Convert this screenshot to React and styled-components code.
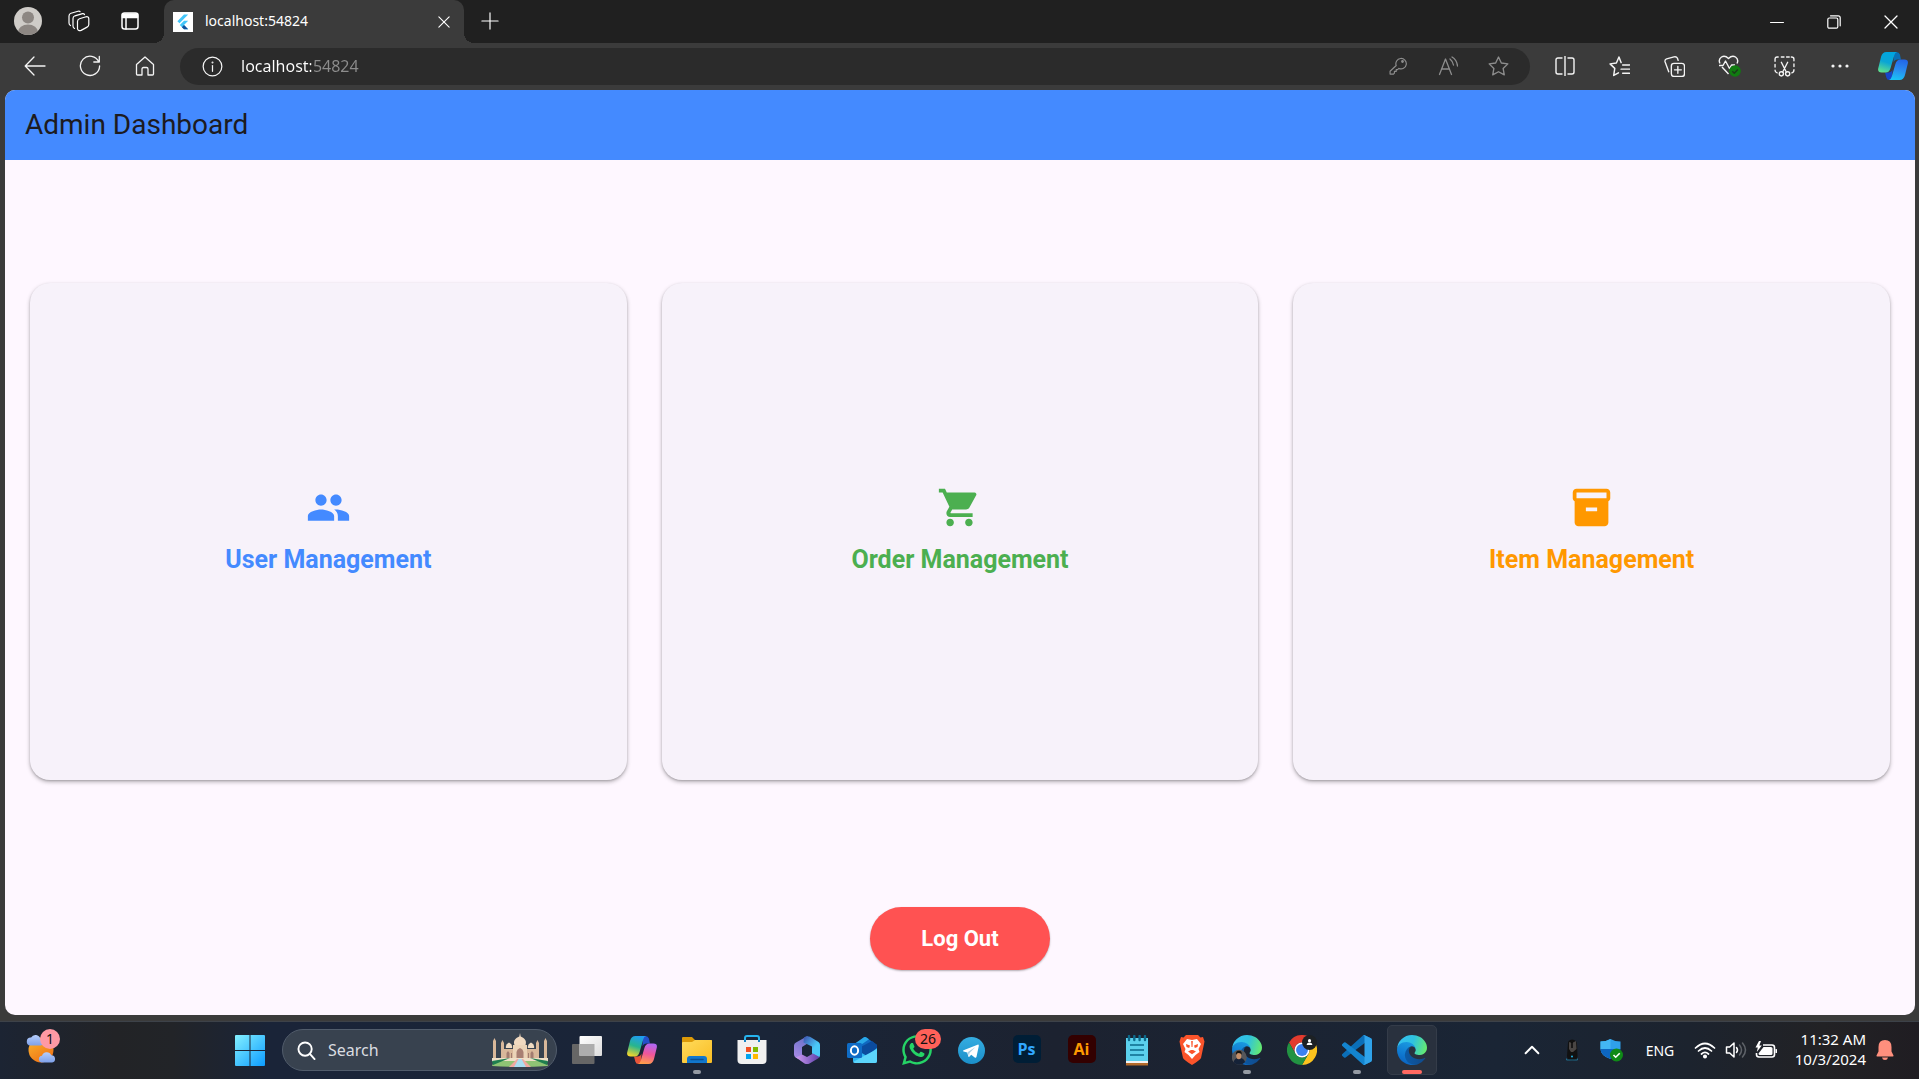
import React from "react";
import styled, { createGlobalStyle } from "styled-components";
import { MdPeople, MdShoppingCart } from "react-icons/md";
import { FaWhatsapp } from "react-icons/fa";

const uiFont = `"Noto Sans", "Open Sans", sans-serif`;

const GlobalStyle = createGlobalStyle`
  *, *::before, *::after { box-sizing: border-box; }
  body { margin: 0; background: #3b3b3b; font-family: ${uiFont}; }
  button { border: 0; padding: 0; background: none; color: inherit; font: inherit; cursor: pointer; }
  svg { display: block; flex: none; }
`;

const Screen = styled.div`
  display: flex;
  flex-direction: column;
  min-height: 100vh;
`;

/* ---------- browser frame ---------- */

const TabStrip = styled.header`
  display: flex;
  height: 43px;
  background: #202020;
  color: #fff;
`;

const StripTools = styled.div`
  display: flex;
  align-items: center;
  width: 164px;
  padding: 0 8px 2px 2px;
`;

const StripButton = styled.button`
  display: grid;
  place-items: center;
  width: 52px;
  height: 42px;
`;

const Tab = styled.div`
  position: relative;
  display: flex;
  align-items: center;
  gap: 12px;
  width: 300px;
  padding: 0 10px 0 9px;
  background: #3b3b3b;
  border-radius: 10px 10px 0 0;
  &::before, &::after {
    content: "";
    position: absolute;
    bottom: 0;
    width: 10px;
    height: 10px;
  }
  &::before { left: -10px; background: radial-gradient(circle at 0 0, #202020 10px, #3b3b3b 10px); }
  &::after { right: -10px; background: radial-gradient(circle at 100% 0, #202020 10px, #3b3b3b 10px); }
`;

const TabTitle = styled.span`
  flex: 1;
  padding-bottom: 2px;
  font-size: 14px;
  line-height: 20px;
`;

const TabClose = styled.button`
  display: grid;
  place-items: center;
  width: 20px;
  height: 20px;
`;

const WindowControls = styled.div`
  display: flex;
  margin-left: auto;
`;

const WindowButton = styled.button`
  display: grid;
  place-items: center;
  width: 57px;
  height: 43px;
`;

const Toolbar = styled.nav`
  display: flex;
  align-items: center;
  height: 47px;
  padding: 0 0 1px 7px;
  background: #3b3b3b;
  color: #f4f4f4;
`;

const ToolButton = styled.button`
  display: grid;
  place-items: center;
  width: ${(p) => p.$width || 55}px;
  height: 37px;
  color: ${(p) => (p.$dim ? "#8d8d8d" : "inherit")};
`;

const AddressBar = styled.div`
  display: flex;
  flex: 1;
  align-items: center;
  height: 37px;
  margin: 0 7px 0 8px;
  padding: 0 7px 0 17px;
  border-radius: 19px;
  background: #2b2b2b;
`;

const AddressInput = styled.input`
  flex: 1;
  min-width: 0;
  height: 28px;
  margin-left: 13px;
  padding: 0;
  border: 0;
  outline: 0;
  font-family: ${uiFont};
  font-size: 16px;
  color: transparent;
  background: linear-gradient(90deg, #fff 70px, #8d8d8d 70px);
  background-clip: text;
  -webkit-background-clip: text;
`;

/* ---------- page ---------- */

const Viewport = styled.div`
  display: flex;
  flex: 1;
  flex-direction: column;
  margin: 0 4px 6px 5px;
  border-radius: 10px;
  overflow: hidden;
  background: #fef7ff;
  font-family: Roboto, sans-serif;
`;

const AppBar = styled.div`
  display: flex;
  align-items: center;
  height: 70px;
  padding: 0 20px;
  background: #448aff;
`;

const AppTitle = styled.h1`
  margin: 0;
  font-size: 28px;
  font-weight: 400;
  line-height: 36px;
  color: #1d1b20;
`;

const Dashboard = styled.main`
  display: flex;
  flex: 1;
  flex-direction: column;
  align-items: center;
  padding: 0 25px 45px;
`;

const CardArea = styled.div`
  display: flex;
  flex: 1;
  align-items: center;
  width: 100%;
`;

const CardGrid = styled.div`
  display: grid;
  flex: 1;
  grid-template-columns: repeat(3, 1fr);
  gap: 35px;
`;

const Card = styled.button`
  display: flex;
  flex-direction: column;
  align-items: center;
  justify-content: center;
  gap: 12px;
  aspect-ratio: 6 / 5;
  border-radius: 20px;
  background: #f7f2fa;
  box-shadow: 0 2px 4px rgba(0, 0, 0, 0.28), 0 1px 2px rgba(0, 0, 0, 0.14);
  color: ${(p) => p.$accent};
`;

const CardLabel = styled.span`
  font-size: 25px;
  font-weight: 700;
  line-height: 36px;
`;

const LogOut = styled.button`
  width: 180px;
  height: 63px;
  margin-top: 4px;
  border-radius: 32px;
  background: #ff5252;
  box-shadow: 0 1px 2px rgba(0, 0, 0, 0.3);
  color: #fff;
  font-size: 22px;
  font-weight: 700;
  line-height: 28px;
`;

/* ---------- taskbar ---------- */

const Taskbar = styled.footer`
  display: flex;
  align-items: center;
  height: 58px;
  box-shadow: inset 0 1px #3d4249;
  background: linear-gradient(90deg, #1c2433 0%, #222326 6%, #222428 9%, #1a2438 14%, #1a2538 40%, #1c2230 55%, #1a2535 78%, #1c232e 88%, #222225 95%, #201d22 100%);
  color: #fff;
`;

const WeatherArea = styled.div`
  flex: none;
  width: 222px;
  padding-left: 14px;
`;

const Slot = styled.button`
  position: relative;
  display: grid;
  place-items: center;
  flex: none;
  width: 55px;
  height: 50px;
`;

const ActiveSlot = styled(Slot)`
  width: 50px;
  margin: 0 2px 0 3px;
  border: 1px solid #343c49;
  border-radius: 5px;
  background: #29313e;
`;

const Indicator = styled.span`
  position: absolute;
  bottom: ${(p) => (p.$active ? 0 : 1)}px;
  left: 50%;
  width: ${(p) => (p.$active ? 20 : 8)}px;
  height: 4px;
  border-radius: 2px;
  background: ${(p) => (p.$active ? "#ff6961" : "#949aa3")};
  transform: translateX(-50%);
`;

const Badge = styled.span`
  position: absolute;
  top: 4px;
  right: ${(p) => p.$right}px;
  min-width: 20px;
  height: 20px;
  padding: 0 5px;
  border-radius: 10px;
  background: ${(p) => p.$color};
  color: #111;
  font-size: 14px;
  line-height: 20px;
  text-align: center;
`;

const SearchBox = styled.label`
  display: flex;
  align-items: center;
  flex: none;
  width: 275px;
  height: 42px;
  margin: 0 2px 0 5px;
  padding: 0 8px 0 14px;
  border: 1px solid #515c6b;
  border-radius: 21px;
  background: #38424f;
`;

const SearchInput = styled.input`
  flex: 1;
  min-width: 0;
  margin: 0;
  padding: 0 0 0 12px;
  border: 0;
  outline: 0;
  background: none;
  color: #fff;
  font-family: ${uiFont};
  font-size: 16px;
  &::placeholder { color: #dadde1; opacity: 1; }
`;

const AppTile = styled.span`
  display: grid;
  place-items: center;
  width: 28px;
  height: 28px;
  margin-bottom: 2px;
  border-radius: 5px;
  background: ${(p) => p.$bg};
  color: ${(p) => p.$fg};
  font-family: "Open Sans", sans-serif;
  font-size: 16px;
  font-weight: 700;
  line-height: 26px;
`;

const Tray = styled.div`
  display: flex;
  align-items: center;
  margin-left: auto;
  padding-right: 20px;
`;

const TrayButton = styled.button`
  display: grid;
  place-items: center;
  width: ${(p) => p.$width}px;
  height: 50px;
  font-size: 14px;
`;

const Clock = styled.button`
  display: flex;
  flex-direction: column;
  align-items: flex-end;
  width: 84px;
  margin-right: 5px;
  padding-bottom: 2px;
  font-size: 15px;
  line-height: 20px;
  white-space: nowrap;
`;

/* ---------- icons ---------- */

const Line = ({ size = 20, w = 1.3, children, box = 20 }) => (
  <svg width={size} height={size} viewBox={`0 0 ${box} ${box}`} fill="none" stroke="currentColor" strokeWidth={w} strokeLinecap="round" strokeLinejoin="round">
    {children}
  </svg>
);

const Avatar = () => (
  <svg width="28" height="28" viewBox="0 0 28 28">
    <clipPath id="avatarClip"><circle cx="14" cy="14" r="14" /></clipPath>
    <g clipPath="url(#avatarClip)">
      <rect width="28" height="28" fill="#cfccc8" />
      <circle cx="14" cy="10.5" r="6" fill="#8d8783" />
      <ellipse cx="14" cy="25" rx="10" ry="7.5" fill="#8d8783" />
    </g>
  </svg>
);

const Workspaces = () => (
  <Line size={22} box={22} w={1.2}>
    <path d="M11.500 8.800 18 6.800q2.600-.5 2.800 1.800v6q0 1.800-1.700 2.500l-6 3.300q-2.900 1-3.600-1.500V11.500q0-2 2-2.700z" />
    <path d="M6.500 18.500Q5 17.800 5 16V8.500q0-2 2-2.700L14.500 3.600q1.500-.2 2 1" />
    <path d="M2.500 15.500Q1 14.700 1 13V6q0-2 2-2.700L10 1.200q1.400-.4 2 .3" />
  </Line>
);

const TabMenu = () => (
  <Line size={18} box={18} w={1.5}>
    <rect x="1" y="1" width="16" height="16" rx="2.500" />
    <path d="M1.500 2h15v3.500h-15z" fill="currentColor" />
    <path d="M5 6v11" />
  </Line>
);

const Flutter = () => (
  <svg width="20" height="20" viewBox="0 0 20 20">
    <rect width="20" height="20" fill="#fff" />
    <path d="M11 2.500h4.200L6.500 11.300 4.400 9.200z" fill="#42c6fa" />
    <path d="M11 8.800h4.200L11 13l4.200 4.300H11L6.800 13z" fill="#42c6fa" />
    <path d="M8.900 15.200 11 13l4.200 4.300H11z" fill="#12519b" />
  </svg>
);

const Cross = ({ size }) => (
  <Line size={size} box={14} w={1.3}><path d="M1 1l12 12M13 1L1 13" /></Line>
);

const ribbons = {
  browser: [["#00a5e0", "#0aa5d5", "#5fe08d"], ["#2266e8", "#2a8cf0", "#19c3f5"], "#1746c8"],
  taskbar: [["#1f9cf0", "#27b58e", "#f4d62b"], ["#b067f2", "#f0559a", "#ff9e4a"], "#e8553a"],
};

const Copilot = ({ kind, size }) => {
  const [a, b, fold] = ribbons[kind];
  return (
    <svg width={size} height={size} viewBox="0 0 30 28">
      <defs>
        <linearGradient id={`${kind}A`} x1=".6" y1="0" x2=".3" y2="1">
          {a.map((c, i) => <stop key={c} offset={i / 2} stopColor={c} />)}
        </linearGradient>
        <linearGradient id={`${kind}B`} x1=".6" y1="0" x2=".4" y2="1">
          {b.map((c, i) => <stop key={c} offset={i / 2} stopColor={c} />)}
        </linearGradient>
      </defs>
      <path d="M16 0h2.500q2.600 0 3.400 2.600L23 7.500h-3.500q-3 0-4 3z" fill={kind === "browser" ? "#0a6fb5" : "#2450c8"} />
      <path d="M14 28h-2.500q-2.600 0-3.200-2.600L7 20.500h3.500q3 0 4-3z" fill={fold} />
      <path d="M8.500 0H19q-2 .5-2.800 3.400L12.600 16q-1.300 4.500-5 4.500H3.600Q-.8 20.500.3 16L3 5Q4.300 0 8.500 0z" fill={`url(#${kind}A)`} />
      <path d="M21.500 28H11q2-.5 2.800-3.400L17.400 12q1.300-4.500 5-4.500h4q4.400 0 3.300 4.500L27 23q-1.300 5-5.500 5z" fill={`url(#${kind}B)`} />
    </svg>
  );
};

const Inventory = () => (
  <svg width="45" height="45" viewBox="0 0 24 24" fill="currentColor">
    <path d="M20 2H4c-1 0-2 .9-2 2v3.010c0 .72.43 1.340 1 1.690V20c0 1.100 1.100 2 2 2h14c.9 0 2-.9 2-2V8.700c.57-.35 1-.97 1-1.690V4c0-1.100-1-2-2-2zm-5 12H9v-2h6v2zm5-7H4V4l16-.020V7z" />
  </svg>
);

const Weather = () => (
  <svg width="34" height="34" viewBox="0 0 34 34">
    <defs>
      <linearGradient id="sun" x1="0" y1="0" x2=".6" y2="1"><stop offset="0" stopColor="#fbb82e" /><stop offset="1" stopColor="#ef7416" /></linearGradient>
      <linearGradient id="cloud" x1="0" y1="0" x2="0" y2="1"><stop offset="0" stopColor="#b5cdfb" /><stop offset="1" stopColor="#7ea1ea" /></linearGradient>
    </defs>
    <circle cx="16" cy="17" r="12.500" fill="url(#sun)" />
    <path d="M5.500 12.500a4 4 0 01.6-8 5 5 0 019.200 1.200 3.500 3.500 0 01.7 6.800z" fill="url(#cloud)" />
    <path d="M16.500 29.500a3.400 3.400 0 01.5-6.700 5 5 0 019.300-.6 3.700 3.700 0 01.9 7.300z" fill="url(#cloud)" />
  </svg>
);

const WindowsLogo = () => (
  <svg width="30" height="31" viewBox="0 0 30 31">
    <linearGradient id="win" gradientUnits="userSpaceOnUse" x1="0" y1="0" x2="30" y2="31"><stop offset="0" stopColor="#84f0ff" /><stop offset="1" stopColor="#0c9cff" /></linearGradient>
    <path d="M1 0h13.500v15H0V1q0-1 1-1zM15.500 0H29q1 0 1 1v14H15.500zM0 16h14.500v15H1q-1 0-1-1zM15.500 16H30v14q0 1-1 1H15.500z" fill="url(#win)" />
  </svg>
);

const TajMahal = () => (
  <svg width="56" height="34" viewBox="0 0 56 34">
    <g fill="#d9b89a">
      <path d="M1 8l1.500-3L4 8v18H1zM9 10l1.500-3 1.500 3v16H9zM44 10l1.500-3 1.500 3v16h-3zM52 8l1.500-3L55 8v18h-3z" />
      <path d="M12 16h32v11H12z" />
      <path d="M21 12h14v15H21z" fill="#ebd3b7" />
      <path d="M28 0l.7 3.500C33 5.500 35 8 33.500 12h-11C21 8 23 5.500 27.300 3.500z" fill="#f0d9c0" />
      <path d="M14 15q-1-3.500 3-5.500 4 2 3 5.500zM36 15q-1-3.500 3-5.500 4 2 3 5.500z" fill="#efdac2" />
    </g>
    <path d="M24.500 26v-7q.5-3 3.500-4 3 1 3.500 4v7z" fill="#a87f72" />
    <path d="M14.500 25v-5l1.500-2 1.500 2v5zM38.500 25v-5l1.500-2 1.500 2v5zM19 25v-5h1v5zM36 25v-5h1v5z" fill="#a27c70" />
    <path d="M0 25h56v4H0z" fill="#efe0c8" />
    <path d="M0 33l2-5h52l2 5q-28 2-56 0z" fill="#8fc474" />
    <path d="M0 28l18-3-17 7zM56 28l-18-3 17 7z" fill="#1f7f4f" />
    <path d="M25 26h6l8 8H17z" fill="#f0a9a0" />
    <path d="M26.500 26h3l4.500 8H22z" fill="#a9def2" />
  </svg>
);

const TaskView = () => (
  <svg width="30" height="28" viewBox="0 0 30 28">
    <linearGradient id="tv" x1="0" y1="0" x2="1" y2="1"><stop offset="0" stopColor="#fff" /><stop offset="1" stopColor="#dcdcdc" /></linearGradient>
    <rect y="8" width="22.500" height="20" rx="1" fill="#666" />
    <rect x="7.500" width="22.500" height="20" rx="1" fill="url(#tv)" />
    <path d="M7.500 8h15v12h-15z" fill="#adadad" />
  </svg>
);

const Explorer = () => (
  <svg width="30" height="28" viewBox="0 0 30 28">
    <linearGradient id="folder" x1="0" y1="0" x2="1" y2="1"><stop offset="0" stopColor="#ffdb5c" /><stop offset="1" stopColor="#f9bd23" /></linearGradient>
    <path d="M0 2q0-1 1-1h9l3 3h16q1 0 1 1v9H0z" fill="#dc9a08" />
    <path d="M0 7q0-1 1-1h9l3-2h16q1 0 1 1v21q0 1-1 1H1q-1 0-1-1z" fill="url(#folder)" />
    <path d="M5 27v-4q0-3 3-3h14q3 0 3 3v4z" fill="#1177cd" />
    <path d="M9 23.500h12" stroke="#0a4f92" strokeWidth="1.500" strokeLinecap="round" />
  </svg>
);

const Store = () => (
  <svg width="30" height="30" viewBox="0 0 30 30">
    <path d="M8 7V3q0-2 2-2h10q2 0 2 2v4" fill="none" stroke="#26b4ee" strokeWidth="2" />
    <path d="M.5 5h29v20q0 4-4 4h-21q-4 0-4-4z" fill="#f0f0f0" />
    <path d="M9 12h5v5H9z" fill="#f25022" /><path d="M16 12h5v5h-5z" fill="#7fba00" />
    <path d="M9 19h5v5H9z" fill="#00a4ef" /><path d="M16 19h5v5h-5z" fill="#ffb900" />
    <path d="M8 5v2M22 5v2" stroke="#1784c4" strokeWidth="2" />
  </svg>
);

const Office = () => (
  <svg width="28" height="30" viewBox="0 0 28 30">
    <defs>
      <linearGradient id="of1" x1=".6" y1="0" x2=".2" y2="1"><stop offset="0" stopColor="#6b72c8" /><stop offset="1" stopColor="#a98be8" /></linearGradient>
      <linearGradient id="of2" x1="0" y1="0" x2="1" y2="1"><stop offset="0" stopColor="#3d4fae" /><stop offset=".6" stopColor="#4ac8f7" /></linearGradient>
      <linearGradient id="of3" x1="0" y1="0" x2="1" y2="0"><stop offset="0" stopColor="#cf9bf2" /><stop offset="1" stopColor="#5b3fa8" /></linearGradient>
    </defs>
    <path d="M14.500 1 3 7.500Q1 8.500 1 10.500v9q0 2 1.800 3.200L6 24l3-2.500V12l5.500-3.500z" fill="url(#of1)" />
    <path d="M11 2.500Q14 .2 17 1.800L25.500 7Q27 8 27 10v10q0 1.500-1 2.500l-7-4v-7L10.500 7.500z" fill="url(#of2)" />
    <path d="M3 22.500l6-3 5 2.500 6-3.500 6.500 3.500-1.500 1.500-8.500 5q-2.500 1.200-5 0z" fill="url(#of3)" />
  </svg>
);

const Outlook = () => (
  <svg width="30" height="28" viewBox="0 0 30 28">
    <path d="M6 9 17 1.200q1-.6 2 0L30 9v8H6z" fill="#1068c0" />
    <path d="M6 9l11-7.800q1-.6 2 0l3 2L8 13z" fill="#29a8e8" />
    <path d="M10 13 25 5l5 4v6l-15 8z" fill="#0b4b9e" />
    <path d="M6 12l14 8 10-8v13q0 2-2 2H8q-2 0-2-2z" fill="#2fb7f3" />
    <path d="M6 26l24-13v12q0 2-2 2H8z" fill="#5cd5fb" />
    <rect y="7" width="15" height="15" rx="1.500" fill="#0f6cc6" />
    <ellipse cx="7.500" cy="14.500" rx="3.600" ry="4.200" fill="none" stroke="#fff" strokeWidth="2" />
  </svg>
);

const Telegram = () => (
  <svg width="27" height="27" viewBox="0 0 27 27">
    <linearGradient id="tg" x1="0" y1="0" x2="0" y2="1"><stop offset="0" stopColor="#35ade1" /><stop offset="1" stopColor="#1b8fc9" /></linearGradient>
    <circle cx="13.500" cy="13.500" r="13.500" fill="url(#tg)" />
    <path d="M5.500 13.200 19.500 7.700q1.500-.4 1.300 1.200l-2.300 10.900q-.4 1.500-1.800.7l-3.500-2.700-1.900 1.900q-.8.7-1-.4l-1.100-3.800-3.600-1.100q-1.200-.5-.1-1.200z" fill="#fff" />
    <path d="M9.500 15.300 17.500 10 11.500 16l-.4 3.300z" fill="#a9cfe5" />
  </svg>
);

const Notepad = () => (
  <svg width="24" height="31" viewBox="0 0 24 31">
    <path d="M1 25h22v5.500H1z" fill="#b36a2a" />
    <path d="M1 3h22v25H1z" fill="#f2f2f2" />
    <path d="M1 3h22v23H1z" fill="#5bd0ec" />
    <path d="M4 1v4M9.300 1v4M14.600 1v4M20 1v4" stroke="#0d6a8c" strokeWidth="2.400" strokeLinecap="round" />
    <path d="M5 10h14M5 15h14M5 20h14" stroke="#0d6a8c" strokeWidth="1.700" />
  </svg>
);

const Brave = () => (
  <svg width="26" height="30" viewBox="0 0 26 30">
    <path d="M7 0h12l2.500 2.500L24 2l1.500 4.500L25 9l-3 14q-1 2-9 7-8-5-9-7L1 9 .5 6.500 2 2l2.500.5z" fill="#fb542b" />
    <path d="M13 5l5-1 4 5-2.500 5 1 3-4 3-3.500 4-3.500-4-4-3 1-3L4 9l4-5z" fill="#fff" />
    <path d="M7 9l4 1.500-.8 2.500L7.500 12zM19 9l-4 1.500.8 2.500 2.700-1zM9 16.500l3-1.500h2l3 1.500-4 2.800zM12.200 6h1.600l-.3 6h-1z" fill="#fb542b" />
  </svg>
);

const Edge = ({ children }) => (
  <svg width="30" height="30" viewBox="0 0 256 256">
    <defs>
      <linearGradient id="edA" x1=".1" y1=".5" x2="1" y2=".5"><stop offset="0" stopColor="#0c59a4" /><stop offset="1" stopColor="#114a8b" /></linearGradient>
      <linearGradient id="edB" x1=".6" y1="0" x2=".3" y2="1"><stop offset="0" stopColor="#1b9de2" /><stop offset=".6" stopColor="#0f78d0" /><stop offset="1" stopColor="#0a60bd" /></linearGradient>
      <linearGradient id="edC" x1="0" y1=".4" x2="1" y2=".6"><stop offset="0" stopColor="#35c1f1" /><stop offset=".5" stopColor="#2fc2df" /><stop offset="1" stopColor="#66eb6e" /></linearGradient>
    </defs>
    <path d="M235.680 195.460a93.730 93.730 0 01-10.540 4.710 101.870 101.870 0 01-35.900 6.460c-47.320 0-88.540-32.550-88.540-74.320A31.480 31.480 0 01117.130 105c-42.800 1.800-53.800 46.400-53.800 72.530 0 73.880 68.090 78.370 82.760 78.370 7.910 0 19.840-2.300 27-4.560l1.310-.44a128.340 128.340 0 0066.600-49.800 4 4 0 00-5.320-5.640z" fill="url(#edA)" />
    <path d="M105.730 241.420a79.200 79.200 0 01-22.740-21.340 80.720 80.720 0 0129.530-120c3.120-1.470 8.450-4.130 15.540-4a32.350 32.350 0 0125.690 13 31.880 31.880 0 016.360 18.660c0-.21 24.460-79.600-80-79.600-43.900 0-80 41.660-80 78.210a130.150 130.150 0 0012.110 56 128 128 0 00156.380 67.110 75.550 75.550 0 01-62.780-8z" fill="url(#edB)" />
    <path d="M152.290 148.860c-.81 1.050-3.300 2.500-3.300 5.660 0 2.610 1.700 5.120 4.720 7.230 14.380 10 41.490 8.680 41.560 8.680a59.560 59.560 0 0030.270-8.350 61.380 61.380 0 0030.430-52.880c.26-22.410-8-37.310-11.340-43.910C223.460 23.840 177.720 0 128 0A128 128 0 000 126.200c.48-36.540 36.800-66.050 80-66.050 3.500 0 23.460.34 42 10.070 16.340 8.580 24.900 18.940 30.850 29.210 6.180 10.670 7.280 24.150 7.280 29.520s-2.740 13.330-7.840 19.910z" fill="url(#edC)" />
    {children}
  </svg>
);

const ProfilePhoto = () => (
  <g>
    <circle cx="62" cy="190" r="64" fill="#55565a" />
    <path d="M14 232q8-36 44-38 40 0 54 36-22 24-50 24-30 0-48-22z" fill="#152238" />
    <ellipse cx="58" cy="176" rx="22" ry="30" fill="#c48e68" />
    <path d="M34 170q-4-36 26-36 28 2 22 34-6-14-24-14-18 0-24 16z" fill="#16130f" />
  </g>
);

const Chrome = () => (
  <svg width="30" height="30" viewBox="0 0 48 48">
    <path d="M24 12h20.800A24 24 0 003.200 12l10.400 18A12 12 0 0124 12z" fill="#e33b2e" />
    <path d="M24 12h20.800A24 24 0 0124 48l10.400-18A12 12 0 0024 12z" fill="#fcc31e" />
    <path d="M13.600 30 3.200 12A24 24 0 0024 48l10.400-18a12 12 0 01-20.800 0z" fill="#229342" />
    <circle cx="24" cy="24" r="12" fill="#fff" />
    <circle cx="24" cy="24" r="9.500" fill="#3b82f0" />
    <circle cx="36" cy="12" r="12" fill="#1d2124" />
    <circle cx="36" cy="9" r="2.500" fill="#fff" />
    <path d="M31.500 16q0-4 4.500-4t4.500 4z" fill="#fff" />
  </svg>
);

const VsCode = () => (
  <svg width="30" height="30" viewBox="0 0 100 100">
    <path d="M96.500 10.800 75.900.9a6.200 6.200 0 00-7.100 1.200L1.300 63.600a4.200 4.200 0 000 6.200l5.500 5a4.200 4.200 0 005.300.2L93.400 13.400A4.100 4.100 0 01100 16.600v-.2a6.200 6.200 0 00-3.500-5.600z" fill="#0b6fb8" />
    <path d="M96.500 89.200 75.900 99.100a6.200 6.200 0 01-7.100-1.200L1.300 36.400a4.200 4.200 0 010-6.200l5.500-5a4.200 4.200 0 015.300-.2l81.300 61.600A4.100 4.100 0 00100 83.400v.2a6.200 6.200 0 01-3.500 5.600z" fill="#1384cf" />
    <path d="M75.900 99.100a6.200 6.200 0 01-7.100-1.200 3.700 3.700 0 006.200-2.600V4.700a3.700 3.700 0 00-6.200-2.600A6.200 6.200 0 0175.900.9l20.600 9.900A6.200 6.200 0 01100 16.400v67.200a6.200 6.200 0 01-3.500 5.600z" fill="#2fa3ea" />
  </svg>
);

const Mouse = () => (
  <svg width="14" height="22" viewBox="0 0 14 22">
    <path d="M3 4q0-3 4-3.500Q12 1 12 5l.5 12q0 4-5.500 4.500Q2 21 2 17z" fill="#111" />
    <path d="M4 3l3 1 4-2 .5 8L8 13H6L4 10z" fill="#4a4644" />
    <path d="M7 3v6" stroke="#0a0a0a" strokeWidth="1.500" />
    <path d="M1.500 19.500V21h11v-1.500" stroke="#1f6d8c" fill="none" />
    <circle cx="7" cy="17.500" r="1" fill="#21b3e8" />
  </svg>
);

const Shield = () => (
  <svg width="24" height="24" viewBox="0 0 24 24">
    <path d="M10.500 1Q15 3.500 20.500 3.500V11H.5V3.500Q6 3.500 10.500 1z" fill="#2fa0ea" />
    <path d="M10.500 1v20Q.5 17.500.5 11V3.500Q6 3.500 10.500 1z" fill="#43b6f3" />
    <path d="M.5 11h20q0 6.500-10 10-10-3.500-10-10z" fill="#0d66c0" />
    <circle cx="16.500" cy="17" r="6.500" fill="#0f8a17" />
    <path d="M13.500 17l2.200 2.200 4-4" fill="none" stroke="#fff" strokeWidth="1.600" />
  </svg>
);

const Wifi = () => (
  <svg width="22" height="17" viewBox="0 0 22 17" fill="none" stroke="#fff" strokeWidth="1.700" strokeLinecap="round">
    <path d="M1.500 6q9.500-9 19 0M4.500 9q6.500-6 13 0M7.500 12q3.500-3.200 7 0" />
    <circle cx="11" cy="14.500" r="1.200" fill="#fff" />
  </svg>
);

const Speaker = () => (
  <svg width="22" height="18" viewBox="0 0 22 18" fill="none" strokeWidth="1.500" strokeLinecap="round" strokeLinejoin="round">
    <path d="M1.500 6h3.200L9 2v14l-4.300-4H1.500z" stroke="#fff" />
    <path d="M11.500 6.500q2 2.500 0 5" stroke="#fff" />
    <path d="M14.500 4q4 5 0 10M17.500 2q6 7 0 14" stroke="#5f6369" />
  </svg>
);

const Battery = () => (
  <svg width="22" height="18" viewBox="0 0 22 18">
    <path d="M8 4h9q2.500 0 2.500 2.500v7Q19.500 16 17 16H4q-2.500 0-2.500-2.500V12" fill="none" stroke="#fff" strokeWidth="1.600" />
    <path d="M8.500 6h7.500q1.500 0 1.500 1.500v5Q17.500 14 16 14H5q-1.500 0-1.500-1.500z" fill="#fff" />
    <path d="M20.500 8h1q.5 0 .5.500v3q0 .5-.5.500h-1z" fill="#fff" />
    <path d="M4 0 .5 6.500h2.300L1.800 11 6.800 4.500H4.300L6 0z" fill="#fff" />
  </svg>
);

const Bell = () => (
  <svg width="18" height="20" viewBox="0 0 18 20" fill="#ff8f7d">
    <path d="M9 0q6.500 0 6.500 7v4.500l2 4q.3 1-.8 1H1.300q-1.100 0-.8-1l2-4V7Q2.500 0 9 0z" />
    <path d="M6 17.500h6q-.5 2.500-3 2.500t-3-2.500z" />
  </svg>
);

/* ---------- data ---------- */

const sections = [
  { label: "User Management", accent: "#448aff", icon: <MdPeople size={45} /> },
  { label: "Order Management", accent: "#4caf50", icon: <MdShoppingCart size={45} /> },
  { label: "Item Management", accent: "#ff9800", icon: <Inventory /> },
];

const apps = [
  { name: "Task view", icon: <TaskView /> },
  { name: "Copilot", icon: <Copilot kind="taskbar" size={30} /> },
  { name: "File Explorer", icon: <Explorer />, open: true },
  { name: "Microsoft Store", icon: <Store /> },
  { name: "Microsoft 365", icon: <Office /> },
  { name: "Outlook", icon: <Outlook /> },
  { name: "WhatsApp", icon: <FaWhatsapp size={34} color="#25d366" />, badge: "26" },
  { name: "Telegram", icon: <Telegram /> },
  { name: "Photoshop", icon: <AppTile $bg="#001e36" $fg="#31a8ff">Ps</AppTile> },
  { name: "Illustrator", icon: <AppTile $bg="#330000" $fg="#ff9a00">Ai</AppTile> },
  { name: "Notepad", icon: <Notepad /> },
  { name: "Brave", icon: <Brave /> },
  { name: "Edge profile", icon: <Edge><ProfilePhoto /></Edge>, open: true },
  { name: "Chrome", icon: <Chrome /> },
  { name: "Visual Studio Code", icon: <VsCode />, open: true },
];

/* ---------- sections ---------- */

const BrowserTabs = () => (
  <TabStrip>
    <StripTools>
      <StripButton aria-label="Profile"><Avatar /></StripButton>
      <StripButton aria-label="Workspaces"><Workspaces /></StripButton>
      <StripButton aria-label="Tab actions"><TabMenu /></StripButton>
    </StripTools>
    <Tab>
      <Flutter />
      <TabTitle>localhost:54824</TabTitle>
      <TabClose aria-label="Close tab"><Cross size={12} /></TabClose>
    </Tab>
    <StripButton aria-label="New tab"><Line size={18}><path d="M10 1v18M1 10h18" /></Line></StripButton>
    <WindowControls>
      <WindowButton aria-label="Minimize"><Line size={14} box={14} w={1}><path d="M.5 7.500h13" /></Line></WindowButton>
      <WindowButton aria-label="Restore">
        <Line size={14} box={14} w={1.200}><rect x=".8" y="3" width="10" height="10.200" rx="1.500" /><path d="M3.500.8h7.700q2 0 2 2v8" /></Line>
      </WindowButton>
      <WindowButton aria-label="Close"><Cross size={14} /></WindowButton>
    </WindowControls>
  </TabStrip>
);

const BrowserToolbar = () => (
  <Toolbar>
    <ToolButton aria-label="Back"><Line size={22} box={22}><path d="M21 11H1.500M10 2 1.200 11 10 20" /></Line></ToolButton>
    <ToolButton aria-label="Refresh"><Line size={22} box={22}><path d="M19.800 7A9.600 9.600 0 1020.600 11M20.300 1.500V7h-5.500" /></Line></ToolButton>
    <ToolButton aria-label="Home"><Line size={20}><path d="M1.500 8.500 10 1l8.500 7.500V18q0 1-1 1H13v-6q0-1.500-1.500-1.500h-3Q7 11.500 7 13v6H2.500q-1 0-1-1z" /></Line></ToolButton>
    <AddressBar>
      <ToolButton $width={31} aria-label="Site information"><Line size={21} box={22}><circle cx="11" cy="11" r="9.800" /><path d="M11 10v6" /><circle cx="11" cy="6.800" r=".4" fill="currentColor" /></Line></ToolButton>
      <AddressInput aria-label="Address" defaultValue="localhost:54824" />
      <ToolButton $width={50} $dim aria-label="Passwords">
        <Line size={18}><path d="M8 9.500a5.800 5.800 0 113 3.200L9.500 14H8v2H6v2l-1 1H1.200v-3.200z" /><circle cx="15" cy="5" r=".9" fill="currentColor" /></Line>
      </ToolButton>
      <ToolButton $width={50} $dim aria-label="Read aloud"><Line size={20}><path d="M1.500 18.500 7.500 3l6 15.500M3.500 13h8M12 3q3 2.500 3.500 6M14 1q5 3 5.500 9" /></Line></ToolButton>
      <ToolButton $width={50} $dim aria-label="Add to favorites"><Line size={21}><path d="M10 1l2.700 5.700 6.200.8-4.500 4.300 1.100 6.200-5.500-3-5.500 3 1.100-6.200L1.100 7.500l6.200-.8z" /></Line></ToolButton>
    </AddressBar>
    <ToolButton aria-label="Split screen"><Line size={20} w={1.400}><path d="M10 0v20M7 2H3Q1 2 1 4v12q0 2 2 2h4M13 2h4q2 0 2 2v12q0 2-2 2h-4" /></Line></ToolButton>
    <ToolButton aria-label="Favorites"><Line size={21} w={1.400}><path d="M11.500 6.300 9.500 1 7 6.700l-6 .8 4.500 4.300L4.500 18.500 9 16M13 8.500h6.500M11.500 12.500h8M13 16.500h6.500" /></Line></ToolButton>
    <ToolButton aria-label="Collections"><Line size={21} w={1.300}><rect x="7" y="7" width="12.500" height="12.500" rx="2.500" /><path d="M13.200 10v6.500M10 13.200h6.500M4.500 15 1 5.500Q.5 3.500 2.500 2.800L9.500.8q2.500-.5 3.300 1.400l.7 2" /></Line></ToolButton>
    <ToolButton aria-label="Browser essentials">
      <svg width="23" height="22" viewBox="0 0 23 22" fill="none" stroke="currentColor" strokeWidth="1.400" strokeLinejoin="round">
        <path d="M2 8.500q-2-4 1.500-6.500Q7 0 10.500 3.500 14 0 17.500 2q3.500 2.500 1.500 6.500M4 12l6.500 7" />
        <path d="M1 10.500h4L7.500 6l4 7.500 2-3.500H17" />
        <circle cx="17" cy="16" r="5.800" fill="#107c10" stroke="none" />
        <path d="M14.300 16.200l2 2 3.500-3.700" stroke="#1b3a1b" />
      </svg>
    </ToolButton>
    <ToolButton aria-label="Screenshot">
      <Line size={21} w={1.300}><path d="M1 5V3q0-2 2-2h1M7 1h2.500M12 1h2.500M16.500 1q2.500 0 2.500 2v1.500M19 7.500V10M19 13q0 2.500-2 3M1 8v2.500M1 13.500q0 2 2 2.500M7 6l4.700 9.200M13 6 8.300 15.200" /><circle cx="7" cy="17" r="2" /><circle cx="13" cy="17" r="2" /></Line>
    </ToolButton>
    <ToolButton aria-label="Settings and more"><svg width="18" height="4" viewBox="0 0 18 4" fill="currentColor"><circle cx="2" cy="2" r="1.600" /><circle cx="9" cy="2" r="1.600" /><circle cx="16" cy="2" r="1.600" /></svg></ToolButton>
    <ToolButton $width={52} aria-label="Copilot"><Copilot kind="browser" size={30} /></ToolButton>
  </Toolbar>
);

const WindowsTaskbar = () => (
  <Taskbar>
    <WeatherArea>
      <Slot aria-label="Weather"><Weather /><Badge $right={9} $color="#ff99a4">1</Badge></Slot>
    </WeatherArea>
    <Slot aria-label="Start"><WindowsLogo /></Slot>
    <SearchBox>
      <Line size={19} w={2}><circle cx="8.500" cy="8.500" r="7" /><path d="M13.800 13.800 18.500 19" /></Line>
      <SearchInput type="text" placeholder="Search" aria-label="Search" />
      <TajMahal />
    </SearchBox>
    {apps.map((app) => (
      <Slot key={app.name} aria-label={app.name}>
        {app.icon}
        {app.badge && <Badge $right={3} $color="#ff6159">{app.badge}</Badge>}
        {app.open && <Indicator />}
      </Slot>
    ))}
    <ActiveSlot aria-label="Edge"><Edge /><Indicator $active /></ActiveSlot>
    <Tray>
      <TrayButton $width={40} aria-label="Hidden icons"><Line size={16} w={2.400}><path d="M2 14l8-8 8 8" /></Line></TrayButton>
      <TrayButton $width={40} aria-label="Mouse"><Mouse /></TrayButton>
      <TrayButton $width={40} aria-label="Windows Security"><Shield /></TrayButton>
      <TrayButton $width={56}>ENG</TrayButton>
      <TrayButton $width={34} aria-label="Network"><Wifi /></TrayButton>
      <TrayButton $width={28} aria-label="Volume"><Speaker /></TrayButton>
      <TrayButton $width={32} aria-label="Battery"><Battery /></TrayButton>
      <Clock><span>11:32 AM</span><span>10/3/2024</span></Clock>
      <TrayButton $width={28} aria-label="Notifications"><Bell /></TrayButton>
    </Tray>
  </Taskbar>
);

export default function App() {
  return (
    <>
      <GlobalStyle />
      <Screen>
        <BrowserTabs />
        <BrowserToolbar />
        <Viewport>
          <AppBar><AppTitle>Admin Dashboard</AppTitle></AppBar>
          <Dashboard>
            <CardArea>
              <CardGrid>
                {sections.map((s) => (
                  <Card key={s.label} $accent={s.accent}>
                    {s.icon}
                    <CardLabel>{s.label}</CardLabel>
                  </Card>
                ))}
              </CardGrid>
            </CardArea>
            <LogOut>Log Out</LogOut>
          </Dashboard>
        </Viewport>
        <WindowsTaskbar />
      </Screen>
    </>
  );
}
